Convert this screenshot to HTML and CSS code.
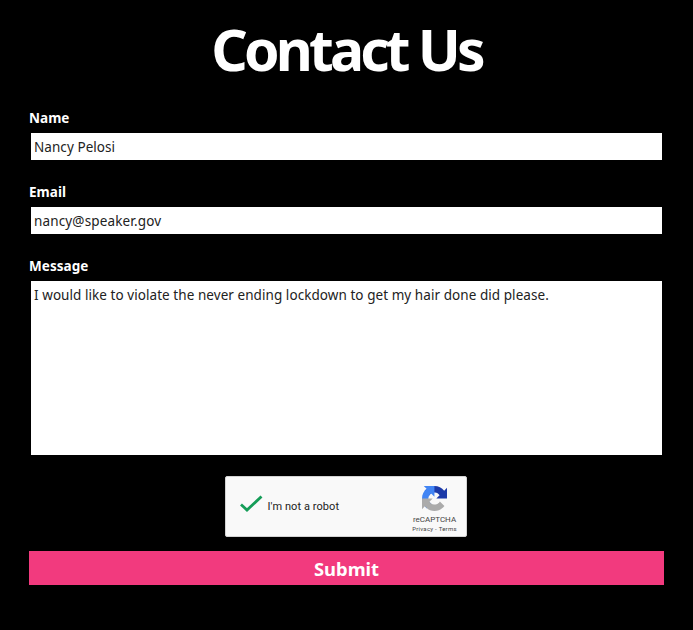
FILE: index.html
```html
<!DOCTYPE html>
<html lang="en">
<head>
<meta charset="utf-8">
<title>Contact Us</title>
<link rel="stylesheet" href="styles.css">
</head>
<body>
<main class="contact">
  <h1 class="title"><span>Contact Us</span></h1>
  <form class="form">
    <label class="label" for="name">Name</label>
    <input class="field name" id="name" type="text" value="Nancy Pelosi">
    <label class="label" for="email">Email</label>
    <input class="field email" id="email" type="text" value="nancy@speaker.gov">
    <label class="label" for="message">Message</label>
    <textarea class="field message" id="message">I would like to violate the never ending lockdown to get my hair done did please.</textarea>
    <div class="captcha">
      <svg class="check" viewBox="0 0 24 20"><path d="M2 10.5 8 16 22.5 2.5" fill="none" stroke="#159d58" stroke-width="2.8"/></svg>
      <span class="robot">I'm not a robot</span>
      <div class="brand">
        <svg class="logo" viewBox="0 0 64 64">
          <path fill="#1c3aa9" d="M64 31.955l-.033-1.37V4.687l-7.16 7.16C50.948 4.674 42.033.093 32.05.093c-10.4 0-19.622 4.96-25.458 12.64l11.736 11.86a15.55 15.55 0 0 1 4.754-5.334c2.05-1.6 4.952-2.906 8.968-2.906.485 0 .86.057 1.135.163 4.976.393 9.288 3.14 11.828 7.124l-8.307 8.307L64 31.953"/>
          <path fill="#4285f4" d="M31.862.094l-1.37.033H4.594l7.16 7.16C4.58 13.147 0 22.06 0 32.046c0 10.4 4.96 19.622 12.64 25.458L24.5 45.768a15.55 15.55 0 0 1-5.334-4.754c-1.6-2.05-2.906-4.952-2.906-8.968 0-.485.057-.86.163-1.135.393-4.976 3.14-9.288 7.124-11.828l8.307 8.307L31.86.095"/>
          <path fill="#ababab" d="M.001 32.045l.033 1.37v25.898l7.16-7.16c5.86 7.173 14.774 11.754 24.76 11.754 10.4 0 19.622-4.96 25.458-12.64l-11.736-11.86a15.55 15.55 0 0 1-4.754 5.334c-2.05 1.6-4.952 2.906-8.968 2.906-.485 0-.86-.057-1.135-.163-4.976-.393-9.288-3.14-11.828-7.124l8.307-8.307c-10.522.04-22.4.066-27.295-.005"/>
        </svg>
        <span class="brand-name">reCAPTCHA</span>
        <span class="terms">Privacy - Terms</span>
      </div>
    </div>
    <button class="submit" type="button">Submit</button>
  </form>
</main>
</body>
</html>
```
FILE: styles.css
```css
* { box-sizing: border-box; }
body {
  margin: 0;
  background: #000;
  color: #fff;
  font-family: "Noto Sans", "Open Sans", sans-serif;
}
.contact { padding: 0 29px; }
.title {
  margin: 0;
  height: 108px;
  padding-top: 9px;
  font-size: 57px;
  line-height: 80px;
  font-weight: 700;
  letter-spacing: -3.85px;
  text-align: center;
}
.form { display: flex; flex-direction: column; }
.label {
  height: 25px;
  font-size: 13.5px;
  line-height: 20px;
  font-weight: 700;
  letter-spacing: .05px;
}
.field {
  display: block;
  height: 27px;
  margin: 0 2px 21px;
  padding: 1px 3px 0;
  border: 0;
  border-radius: 0;
  outline: 0;
  background: #fff;
  color: #222;
  font: 400 13.5px/20px "Noto Sans", "Open Sans", sans-serif;
  letter-spacing: .06px;
}
.field.email, .field.name { margin-bottom: 22px; }
.email { letter-spacing: .15px; }
.message {
  height: 174px;
  padding-top: 4px;
  resize: none;
  overflow: hidden;
}
.captcha {
  display: flex;
  align-items: center;
  align-self: center;
  width: 242px;
  height: 61px;
  margin: 0 2px 14px 0;
  padding: 2px 8px 0 13px;
  border: 1px solid #d3d3d3;
  border-radius: 2px;
  background: #f9f9f9;
  color: #222;
  font-family: Roboto, sans-serif;
}
.check { width: 24px; height: 20px; margin: 0 5px 7px 0; }
.robot {
  margin-bottom: 2px;
  font-size: 11px;
  letter-spacing: .07px;
  white-space: nowrap;
}
.brand {
  display: flex;
  flex-direction: column;
  align-items: center;
  width: 46px;
  margin: 3px 0 0 auto;
  color: #444;
  white-space: nowrap;
}
.logo { width: 25px; height: 25px; }
.brand-name { margin-top: 4px; font-size: 8px; line-height: 10px; }
.terms { font-size: 6px; line-height: 8px; letter-spacing: .25px; }
.submit {
  height: 34px;
  padding: 2px 0 0;
  border: 0;
  background: #f23a7e;
  color: #fff;
  font: 700 18.4px/32px "Noto Sans", "Open Sans", sans-serif;
}
```
